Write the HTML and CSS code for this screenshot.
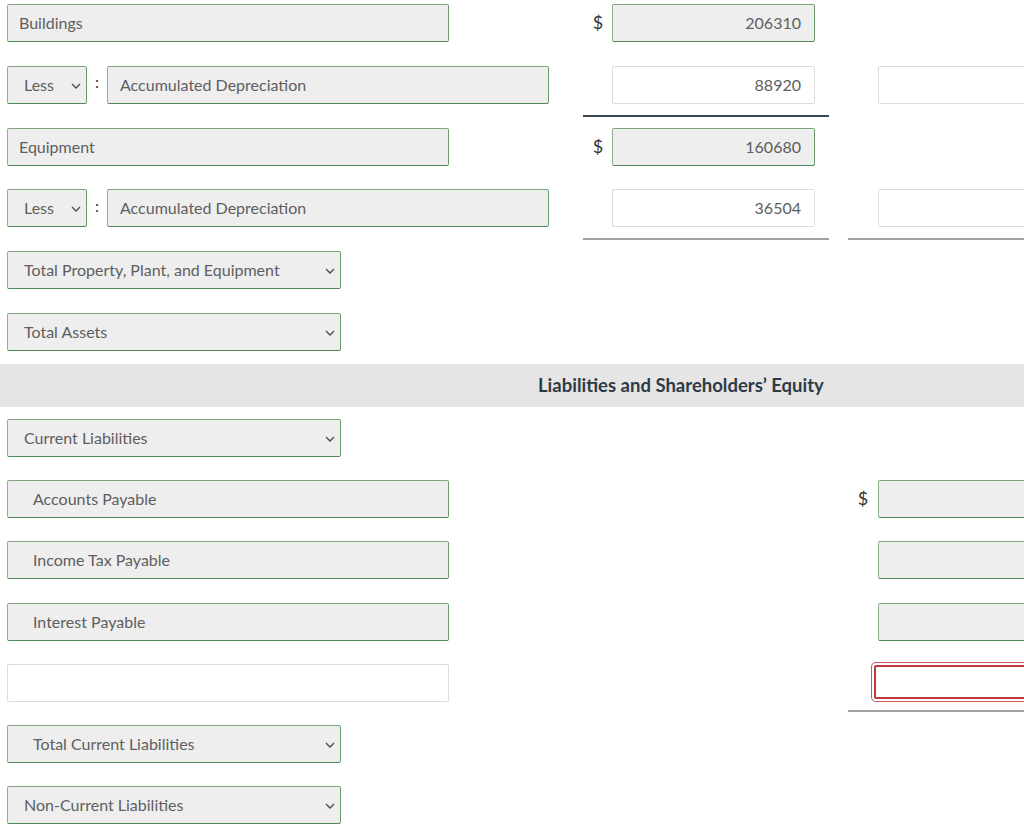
FILE: index.html
```html
<!DOCTYPE html>
<html>
<head>
<meta charset="utf-8">
<link rel="stylesheet" href="styles.css">
</head>
<body>
<div class="page">
  <div class="sec1">
    <div class="row">
      <div class="left"><div class="box fill wide">Buildings</div></div>
      <div class="mid"><span class="dollar">$</span><div class="box fill num">206310</div></div>
      <div class="gap"></div>
      <div class="right"></div>
    </div>
    <div class="row">
      <div class="left">
        <div class="box fill sel less">Less<svg class="chev" viewBox="0 0 10 6" width="10" height="6"><path d="M1 1l4 4 4-4" fill="none" stroke="#4a4a4a" stroke-width="1.3"/></svg></div>
        <span class="colon">:</span>
        <div class="box fill acc">Accumulated Depreciation</div>
      </div>
      <div class="mid line-dark"><span class="dollar"></span><div class="box plain num">88920</div></div>
      <div class="gap"></div>
      <div class="right"><span class="dollar2"></span><div class="box plain val2"></div></div>
    </div>
    <div class="row">
      <div class="left"><div class="box fill wide">Equipment</div></div>
      <div class="mid"><span class="dollar">$</span><div class="box fill num">160680</div></div>
      <div class="gap"></div>
      <div class="right"></div>
    </div>
    <div class="row">
      <div class="left">
        <div class="box fill sel less">Less<svg class="chev" viewBox="0 0 10 6" width="10" height="6"><path d="M1 1l4 4 4-4" fill="none" stroke="#4a4a4a" stroke-width="1.3"/></svg></div>
        <span class="colon">:</span>
        <div class="box fill acc">Accumulated Depreciation</div>
      </div>
      <div class="mid line-gray"><span class="dollar"></span><div class="box plain num">36504</div></div>
      <div class="gap"></div>
      <div class="right line-gray"><span class="dollar2"></span><div class="box plain val2"></div></div>
    </div>
    <div class="row">
      <div class="left"><div class="box fill sel medium">Total Property, Plant, and Equipment<svg class="chev" viewBox="0 0 10 6" width="10" height="6"><path d="M1 1l4 4 4-4" fill="none" stroke="#4a4a4a" stroke-width="1.3"/></svg></div></div>
    </div>
    <div class="row last">
      <div class="left"><div class="box fill sel medium">Total Assets<svg class="chev" viewBox="0 0 10 6" width="10" height="6"><path d="M1 1l4 4 4-4" fill="none" stroke="#4a4a4a" stroke-width="1.3"/></svg></div></div>
    </div>
  </div>
  <div class="band"><span class="band-title">Liabilities and Shareholders’ Equity</span></div>
  <div class="sec2">
    <div class="row2">
      <div class="left"><div class="box fill sel medium">Current Liabilities<svg class="chev" viewBox="0 0 10 6" width="10" height="6"><path d="M1 1l4 4 4-4" fill="none" stroke="#4a4a4a" stroke-width="1.3"/></svg></div></div>
    </div>
    <div class="row2">
      <div class="left"><div class="box fill wide indent">Accounts Payable</div></div>
      <div class="mid"></div>
      <div class="gap"></div>
      <div class="right"><span class="dollar2">$</span><div class="box fill val2"></div></div>
    </div>
    <div class="row2">
      <div class="left"><div class="box fill wide indent">Income Tax Payable</div></div>
      <div class="mid"></div>
      <div class="gap"></div>
      <div class="right"><span class="dollar2"></span><div class="box fill val2"></div></div>
    </div>
    <div class="row2">
      <div class="left"><div class="box fill wide indent">Interest Payable</div></div>
      <div class="mid"></div>
      <div class="gap"></div>
      <div class="right"><span class="dollar2"></span><div class="box fill val2"></div></div>
    </div>
    <div class="row2">
      <div class="left"><div class="box plain wide"></div></div>
      <div class="mid"></div>
      <div class="gap"></div>
      <div class="right line-gray"><span class="dollar2 short"></span><div class="box error val2"></div></div>
    </div>
    <div class="row2">
      <div class="left"><div class="box fill sel medium indent">Total Current Liabilities<svg class="chev" viewBox="0 0 10 6" width="10" height="6"><path d="M1 1l4 4 4-4" fill="none" stroke="#4a4a4a" stroke-width="1.3"/></svg></div></div>
    </div>
    <div class="row2">
      <div class="left"><div class="box fill sel medium">Non-Current Liabilities<svg class="chev" viewBox="0 0 10 6" width="10" height="6"><path d="M1 1l4 4 4-4" fill="none" stroke="#4a4a4a" stroke-width="1.3"/></svg></div></div>
    </div>
  </div>
</div>
</body>
</html>
```

FILE: styles.css
```css
html, body {
  margin: 0;
  padding: 0;
  background: #ffffff;
  overflow: hidden;
}
body {
  font-family: Lato, "Open Sans", "Liberation Sans", sans-serif;
  font-size: 16px;
  color: #5e5e5e;
  width: 1024px;
  height: 833px;
}
.page {
  width: 1024px;
  overflow: hidden;
}
.sec1 {
  padding-top: 4px;
}
.row, .row2 {
  display: grid;
  grid-template-columns: 583px 246px 19px 176px;
  align-items: start;
  height: 61.8px;
}
.row2 {
  height: 61.2px;
}
.row.last {
  height: 51px;
}
.left {
  display: flex;
  align-items: center;
  padding-left: 7px;
}
.mid, .right {
  display: flex;
  align-items: center;
}
.mid {
  padding-right: 14px;
}
.line-dark {
  padding-bottom: 11px;
  border-bottom: 2px solid #3d4750;
}
.line-gray {
  padding-bottom: 11px;
  border-bottom: 2px solid #a0a0a0;
}
.dollar {
  width: 29px;
  text-align: center;
  font-size: 18px;
  color: #333;
  padding-left: 1px;
  padding-bottom: 2px;
  box-sizing: border-box;
}
.dollar2 {
  width: 30px;
  text-align: center;
  font-size: 18px;
  color: #333;
  flex: none;
  padding-bottom: 2px;
}
.dollar2.short {
  width: 23px;
}
.box {
  box-sizing: border-box;
  height: 38px;
  border-radius: 2px;
  display: flex;
  align-items: center;
  flex: none;
  white-space: nowrap;
  padding-bottom: 1px;
}
.fill {
  background: #eeeeee;
  border: 1px solid #6a9a6a;
  border-left-color: #8cb28c;
  border-top-color: #7aa67a;
  border-bottom-color: #4f874f;
}
.plain {
  background: #ffffff;
  border: 1px solid #dcdcdc;
}
.error {
  background: #ffffff;
  border: 2px solid #c1393d;
  box-shadow: 0 0 0 2px #ffffff, 0 0 0 3px #c9585b;
  height: 34px;
  margin-left: 3px;
  margin-top: 1px;
}
.wide {
  width: 442px;
  padding-left: 11px;
}
.wide.indent {
  padding-left: 25px;
}
.num {
  width: 203px;
  justify-content: flex-end;
  padding-right: 13px;
}
.val2 {
  width: 170px;
}
.sel {
  position: relative;
  padding-left: 16px;
}
.chev {
  position: absolute;
  right: 5px;
  top: 16px;
}
.less {
  width: 80px;
}
.medium {
  width: 334px;
}
.medium.indent {
  padding-left: 25px;
}
.colon {
  width: 20px;
  text-align: center;
  color: #333;
  font-size: 16px;
  margin-top: -6px;
}
.acc {
  width: 442px;
  padding-left: 12px;
}
.band {
  height: 43px;
  background: #e5e5e5;
  display: flex;
  align-items: center;
}
.band-title {
  margin-left: 538px;
  font-weight: bold;
  font-size: 18.5px;
  color: #2d3b45;
}
.sec2 {
  padding-top: 12px;
}
```
